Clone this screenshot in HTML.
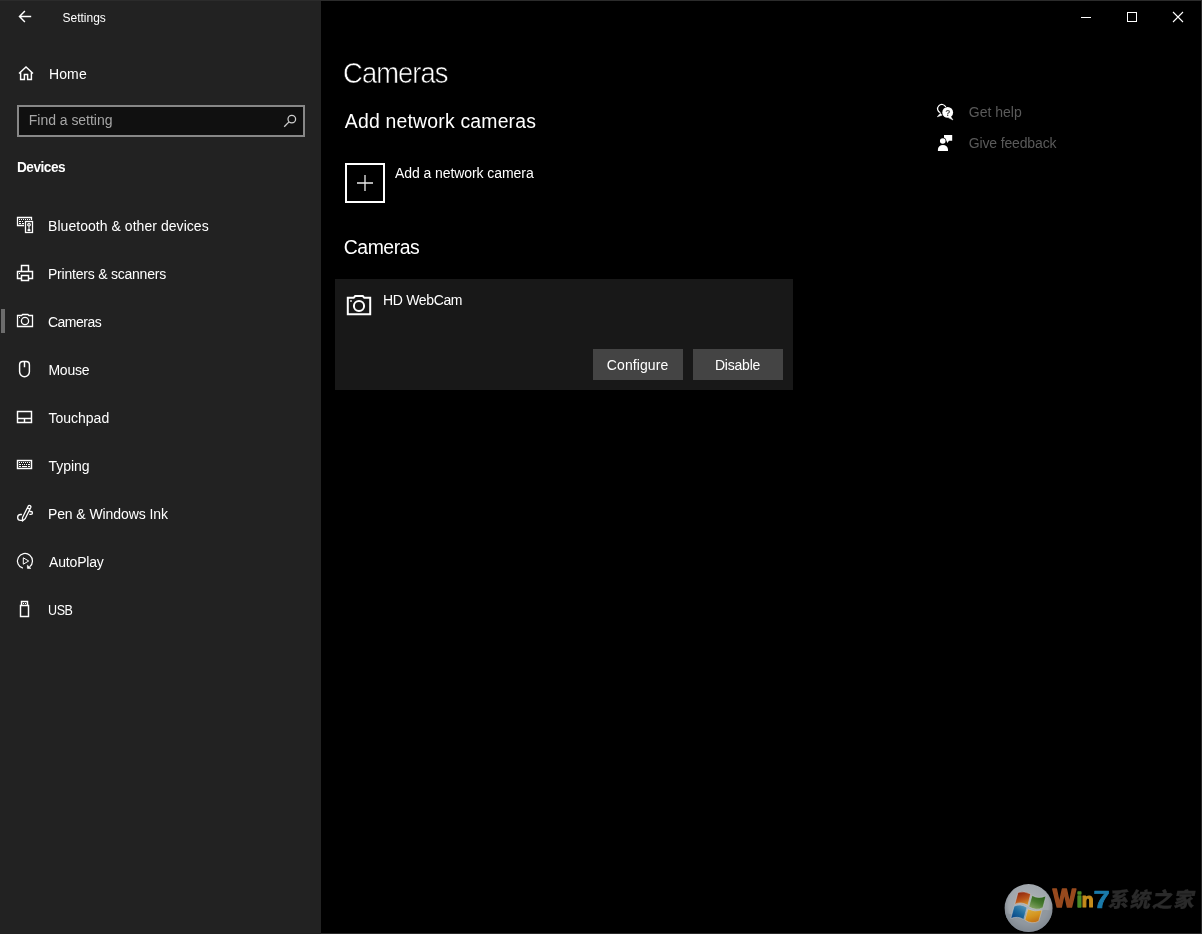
<!DOCTYPE html>
<html lang="en">
<head>
<meta charset="utf-8">
<title>Settings</title>
<style>
html,body{margin:0;padding:0;background:#000;}
body{width:1202px;height:934px;position:relative;overflow:hidden;font-family:"Liberation Sans","Noto Sans CJK SC",sans-serif;color:#fff;}
#win{position:absolute;left:0;top:0;width:1202px;height:934px;background:#000;overflow:hidden;will-change:transform;}
#side{position:absolute;left:0;top:0;width:321px;height:934px;background:#222;}
#topline{position:absolute;left:0;top:0;width:1202px;height:1px;background:#2b2b2b;}
#rightline{position:absolute;left:1201px;top:0;width:1px;height:934px;background:#2a2a2a;}
#botline{position:absolute;left:321px;top:933px;width:881px;height:1px;background:#2a2a2a;}
.t{position:absolute;white-space:nowrap;line-height:20px;font-size:14px;color:#fff;}
.ic{position:absolute;overflow:visible;}
#search{position:absolute;left:17px;top:105px;width:284px;height:28px;border:2px solid #878787;background:#101010;}
#sel{position:absolute;left:1px;top:309px;width:4px;height:24px;background:#6d6d6d;}
#addbox{position:absolute;left:345px;top:163px;width:36px;height:36px;border:2px solid #fff;}
#card{position:absolute;left:335px;top:279px;width:458px;height:111px;background:#181818;}
.btn{position:absolute;top:349px;width:90px;height:31px;background:#444;}
</style>
</head>
<body>
<div id="win">
<div id="side"></div>
<div id="sel"></div>
<div id="search"></div>
<div id="addbox"></div>
<div id="card"></div>
<div class="btn" style="left:593px"></div>
<div class="btn" style="left:693px"></div>

<div class="t" id="t0" style="left:62.58px;top:8.00px;font-size:12px;line-height:20px;letter-spacing:-0.020px;">Settings</div>
<div class="t" id="t1" style="left:49.01px;top:64.00px;font-size:14px;line-height:20px;letter-spacing:0.110px;">Home</div>
<div class="t" id="t2" style="left:28.81px;top:110.00px;font-size:14px;line-height:20px;letter-spacing:-0.029px;color:#a6a6a6;">Find a setting</div>
<div class="t" id="t3" style="left:17.11px;top:157.00px;font-size:14px;line-height:20px;letter-spacing:-0.490px;transform:scaleX(0.9718);transform-origin:0.49px 50%;font-weight:700;">Devices</div>
<div class="t" id="t4" style="left:48.01px;top:216.00px;font-size:14px;line-height:20px;letter-spacing:0.048px;">Bluetooth &amp; other devices</div>
<div class="t" id="t5" style="left:48.01px;top:264.00px;font-size:14px;line-height:20px;letter-spacing:-0.221px;">Printers &amp; scanners</div>
<div class="t" id="t6" style="left:48.01px;top:312.00px;font-size:14px;line-height:20px;letter-spacing:-0.490px;transform:scaleX(0.9969);transform-origin:0.49px 50%;">Cameras</div>
<div class="t" id="t7" style="left:48.41px;top:360.00px;font-size:14px;line-height:20px;letter-spacing:-0.235px;">Mouse</div>
<div class="t" id="t8" style="left:48.51px;top:408.00px;font-size:14px;line-height:20px;letter-spacing:-0.004px;">Touchpad</div>
<div class="t" id="t9" style="left:48.51px;top:456.00px;font-size:14px;line-height:20px;letter-spacing:-0.052px;">Typing</div>
<div class="t" id="t10" style="left:47.91px;top:504.00px;font-size:14px;line-height:20px;letter-spacing:-0.088px;">Pen &amp; Windows Ink</div>
<div class="t" id="t11" style="left:49.11px;top:552.00px;font-size:14px;line-height:20px;letter-spacing:-0.194px;">AutoPlay</div>
<div class="t" id="t12" style="left:48.11px;top:600.00px;font-size:14px;line-height:20px;letter-spacing:-0.490px;transform:scaleX(0.8948);transform-origin:0.49px 50%;">USB</div>
<div class="t" id="t13" style="left:343.26px;top:52.50px;font-size:29.6px;line-height:40px;letter-spacing:-1.036px;transform:scaleX(0.9251);transform-origin:1.04px 50%;-webkit-text-stroke:0.6px #000;">Cameras</div>
<div class="t" id="t14" style="left:344.82px;top:108.00px;font-size:19.4px;line-height:26px;letter-spacing:0.201px;">Add network cameras</div>
<div class="t" id="t15" style="left:394.91px;top:163.00px;font-size:14px;line-height:20px;letter-spacing:-0.068px;">Add a network camera</div>
<div class="t" id="t16" style="left:343.72px;top:234.00px;font-size:19.4px;line-height:26px;letter-spacing:-0.437px;">Cameras</div>
<div class="t" id="t17" style="left:383.11px;top:290.00px;font-size:14px;line-height:20px;letter-spacing:-0.352px;">HD WebCam</div>
<div class="t" id="t18" style="left:606.81px;top:355.00px;font-size:14px;line-height:20px;letter-spacing:0.098px;">Configure</div>
<div class="t" id="t19" style="left:714.91px;top:355.00px;font-size:14px;line-height:20px;letter-spacing:-0.202px;">Disable</div>
<div class="t" id="t20" style="left:968.81px;top:102.00px;font-size:14px;line-height:20px;letter-spacing:-0.007px;color:#5a5a5a;">Get help</div>
<div class="t" id="t21" style="left:968.81px;top:133.00px;font-size:14px;line-height:20px;letter-spacing:-0.151px;color:#5a5a5a;">Give feedback</div>
<svg class="ic" id="icons" style="left:0;top:0" width="1202" height="934" viewBox="0 0 1202 934" fill="none" stroke="#fff" stroke-width="1.45">
<!-- back arrow -->
<path d="M31.2 16.5H19.6M24.9 11.1L19.5 16.5L24.9 21.9"/>
<!-- home -->
<path d="M19 73.6L26 66.9L33 73.6M20.6 72.3V79.5H24.4V74.4H27.6V79.5H31.4V72.3"/>
<!-- search -->
<g stroke="#cfcfcf" stroke-width="1.25"><circle cx="291.8" cy="119.1" r="3.8"/><path d="M289 121.9L284.2 126.8"/></g>
<!-- bluetooth & other devices -->
<path d="M24 225.5H17.5V217.5H31.5V220" stroke-width="1.3"/>
<g fill="#fff" stroke="none"><rect x="19" y="219" width="1" height="1"/><rect x="21" y="219" width="1" height="1"/><rect x="23" y="219" width="1" height="1"/><rect x="25" y="219" width="1" height="1"/><rect x="27" y="219" width="1" height="1"/><rect x="29" y="219" width="1" height="1"/><rect x="19" y="221" width="2" height="1"/><rect x="22" y="221" width="1" height="1"/><rect x="19" y="223" width="2" height="1"/><rect x="22" y="223" width="2" height="1"/></g>
<rect x="25.5" y="221.5" width="7" height="11" stroke-width="1.3"/>
<circle cx="29" cy="224.7" r="1.5" stroke-width="1" fill="#999"/>
<path d="M29 226.4V229" stroke-width="1"/>
<ellipse cx="29" cy="230.1" rx="1.6" ry="1.2" fill="#fff" stroke="none"/>
<!-- printer -->
<path d="M21.5 271.5V265.5H28.5V271.5M21.5 278.5H17.5V271.5H32.5V278.5H28.5M21.5 275.5H28.5V280.5H21.5Z"/>
<rect x="19" y="273" width="1" height="1" fill="#fff" stroke="none"/>
<!-- camera (nav) -->
<path d="M17.5 315.5H21.6L22.6 314.5H27.9L28.9 315.5H32.5V326.5H17.5Z" stroke-width="1.3"/>
<circle cx="25" cy="321" r="3.6" stroke-width="1.3"/>
<rect x="19" y="317" width="1" height="1" fill="#fff" stroke="none"/>
<!-- mouse -->
<path d="M19.6 364.7a3.3 3.3 0 0 1 3.3-3.3h3.2a3.3 3.3 0 0 1 3.3 3.3v7.1a4.9 4.9 0 0 1-9.8 0zM24.5 361.4V367.2"/>
<!-- touchpad -->
<path d="M17.5 411.5H31.5V422.5H17.5ZM17.5 418.5H31.5M24.5 418.5V422.5"/>
<!-- typing -->
<rect x="17.5" y="460.5" width="14" height="8"/>
<g fill="#fff" stroke="none"><rect x="19" y="462" width="1" height="1"/><rect x="21" y="462" width="1" height="1"/><rect x="23" y="462" width="1" height="1"/><rect x="25" y="462" width="1" height="1"/><rect x="27" y="462" width="1" height="1"/><rect x="29" y="462" width="1" height="1"/><rect x="19" y="464" width="2" height="1"/><rect x="22" y="464" width="1" height="1"/><rect x="24" y="464" width="1" height="1"/><rect x="26" y="464" width="1" height="1"/><rect x="28" y="464" width="2" height="1"/><rect x="19" y="466" width="2" height="1"/><rect x="22" y="466" width="5" height="1"/><rect x="28" y="466" width="2" height="1"/></g>
<!-- pen -->
<path d="M22.4 521L22.56 517.49L28.15 506.18A1.45 1.45 0 0 1 30.73 507.5L25.14 518.81ZM27.3 507.9L29.9 509.2M21.9 514.5H20.6A2.95 2.95 0 0 0 20.6 520.4H22M29.6 511.5H31A1.45 1.45 0 0 1 31 514.4H29.3" stroke-width="1.3" stroke-linejoin="round"/>
<!-- autoplay -->
<path d="M22.9 568.2A7.5 7.5 0 1 1 29.6 566.9" stroke-width="1.2"/>
<path d="M27.4 565.2V568.4H30.9Z" fill="#fff" stroke-width="0.6"/>
<path d="M23.3 557.8V564.2L28.7 561Z" stroke-width="1"/>
<!-- usb -->
<path d="M21.5 605.5V601.5H27.5V605.5M20.5 605.5H28.5V616.5H20.5Z"/>
<g fill="#fff" stroke="none"><rect x="23" y="603" width="1" height="1"/><rect x="25" y="603" width="1" height="1"/></g>
<!-- plus -->
<path d="M365 175V191M357 183H373" stroke="#ececec" stroke-width="1.3"/>
<!-- camera (card) -->
<path d="M347.8 297.8H353.7L355.2 296H362.8L364.3 297.8H370.2V314.2H347.8Z" stroke-width="2"/>
<circle cx="359" cy="306" r="5.1" stroke-width="2"/>
<rect x="350.2" y="300.2" width="1.6" height="1.6" fill="#fff" stroke="none"/>
<!-- window controls -->
<g stroke-width="1" shape-rendering="crispEdges"><path d="M1081 17.5H1091"/><rect x="1127.5" y="12.5" width="9" height="9"/></g>
<path d="M1173 12L1183 22M1183 12L1173 22" stroke-width="1.1"/>
<!-- get help -->
<path d="M940.4 112.8A4.3 4.3 0 1 1 945.8 107" stroke-width="1.2"/>
<path d="M940.4 113.2L937.3 116.8L942 115.2Z" fill="#fff" stroke-width="0.5"/>
<circle cx="947.7" cy="112.4" r="5.4" fill="#fff" stroke="none"/>
<path d="M950.6 116.4L953 120L948.6 117.8Z" fill="#fff" stroke-width="0.5"/>
<text x="947.8" y="115.8" font-family="Liberation Sans, sans-serif" font-size="8.5" font-weight="700" text-anchor="middle" fill="#4a4a4a" stroke="none">?</text>
<!-- feedback -->
<g fill="#fff" stroke="none"><path d="M944 135H952.2V140.8H949L947.3 143L946.4 140.8H944Z"/><circle cx="942.75" cy="141" r="3.5" fill="#000"/><circle cx="942.75" cy="141" r="2.8"/><path d="M937.9 151V149.6A5.05 4.6 0 0 1 948 149.6V151Z"/></g>
</svg>

<svg class="ic" id="logo" style="left:0;top:0" width="1202" height="934" viewBox="0 0 1202 934">
<defs>
<radialGradient id="gOrb" cx="0.5" cy="0.42" r="0.55"><stop offset="0" stop-color="#aeb3b8"/><stop offset="0.75" stop-color="#a0a6ac"/><stop offset="1" stop-color="#7f868e"/></radialGradient>
<linearGradient id="gR" x1="0.3" y1="0" x2="0.7" y2="1"><stop offset="0" stop-color="#8e240e"/><stop offset="0.55" stop-color="#b8541a"/><stop offset="1" stop-color="#d49428"/></linearGradient>
<linearGradient id="gG" x1="0.8" y1="0" x2="0.2" y2="1"><stop offset="0" stop-color="#285c1a"/><stop offset="0.5" stop-color="#477a2e"/><stop offset="1" stop-color="#8aa668"/></linearGradient>
<linearGradient id="gB" x1="0.9" y1="0" x2="0.1" y2="1"><stop offset="0" stop-color="#5c9aba"/><stop offset="0.5" stop-color="#1c6a9e"/><stop offset="1" stop-color="#074082"/></linearGradient>
<linearGradient id="gY" x1="0.3" y1="0" x2="0.7" y2="1"><stop offset="0" stop-color="#d8ac40"/><stop offset="0.5" stop-color="#d4941e"/><stop offset="1" stop-color="#bc6a14"/></linearGradient>
<clipPath id="cOrb"><circle cx="1028.6" cy="908.1" r="24"/></clipPath>
</defs>
<circle cx="1028.6" cy="908.1" r="24" fill="url(#gOrb)"/>
<g clip-path="url(#cOrb)"><path d="M1003 912Q1013 916.5 1028 912.5T1054 911V934H1003Z" fill="#868d96" opacity="0.6"/></g>
<g stroke="#c9ced3" stroke-width="0.7" stroke-opacity="0.7">
<path d="M1018 892.4Q1023.7 890.6 1030.6 893.9L1027.9 905.3Q1020.7 901 1014.7 904.4Z" fill="url(#gR)"/>
<path d="M1032.1 895.4Q1037.8 899.3 1045.9 896L1042.9 907.7Q1036.2 911.1 1028.8 906.8Z" fill="url(#gG)"/>
<path d="M1014.1 906.2Q1020.2 903.2 1027 907.4L1023.7 919.4Q1017.5 915.7 1010.8 918.5Z" fill="url(#gB)"/>
<path d="M1027.9 908.9Q1034.6 912.3 1042 910.1L1038.7 921.2Q1031.8 924.8 1024.9 920Z" fill="url(#gY)"/>
</g>
<g font-family="Liberation Sans, sans-serif" font-weight="700" stroke-linejoin="round">
<text x="1052.8" y="907.4" font-size="26.2" fill="#984a1e" stroke="#984a1e" stroke-width="1.4" textLength="23.2" lengthAdjust="spacingAndGlyphs">W</text>
<text x="1076.7" y="907.2" font-size="19.4" fill="#4c8c28" stroke="#4c8c28" stroke-width="1.5">i</text>
<text x="1081.8" y="907.2" font-size="19.4" fill="#c68c1c" stroke="#c68c1c" stroke-width="1.2">n</text>
<text x="1093.4" y="907.5" font-size="24.4" fill="#1a7aaa" stroke="#1a7aaa" stroke-width="0.7" textLength="16.2" lengthAdjust="spacingAndGlyphs">7</text>
</g>
<text x="1107.8" y="906.6" font-family="Noto Sans CJK SC, WenQuanYi Zen Hei, sans-serif" font-weight="900" font-size="20.6" fill="#2a2a2a" stroke="#2a2a2a" stroke-width="0.25" transform="translate(1107.8 906.6) skewX(-10) translate(-1107.8 -906.6)" textLength="86" lengthAdjust="spacing">系统之家</text>
</svg>

<div id="topline"></div>
<div id="rightline"></div>
<div id="botline"></div>
</div>
</body>
</html>
